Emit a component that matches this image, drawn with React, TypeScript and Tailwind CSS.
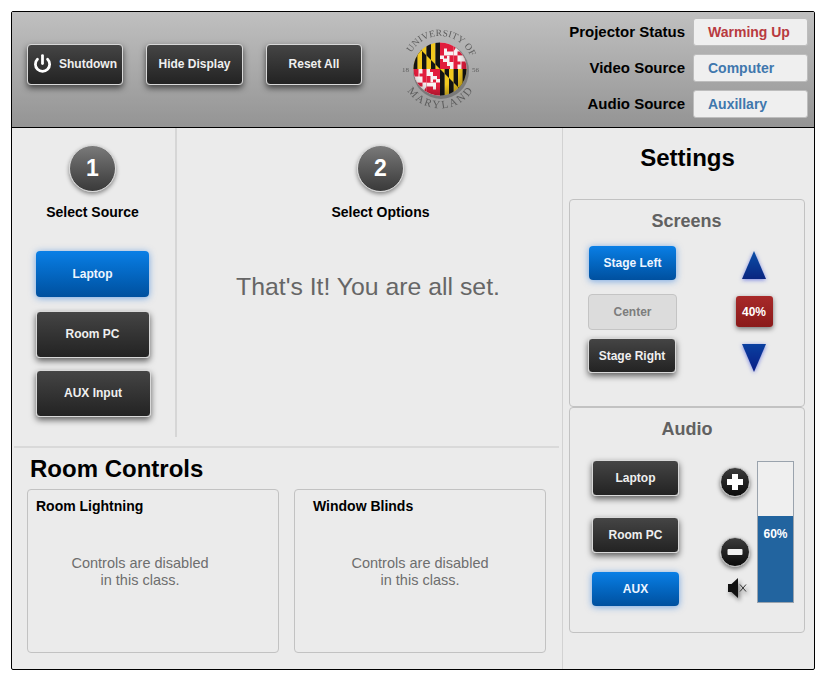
import React from 'react';
import { Power } from 'lucide-react';

const darkBtn =
  'flex items-center justify-center rounded-[4px] border border-[#d8d8d8] bg-gradient-to-b from-[#454545] to-[#232323] text-[12px] font-bold text-[#efefef] shadow-[0_3px_6px_rgba(0,0,0,0.6)]';
const blueBtn =
  'flex items-center justify-center rounded-[4px] bg-gradient-to-b from-[#0a7fe6] to-[#00509f] text-[12px] font-bold text-[#eef5ff] shadow-[0_1px_7px_rgba(20,110,220,0.55)]';
const panel = 'rounded-[4px] border border-[#c2c2c2]';

const Seal: React.FC = () => {
  const stripes = [0, 1, 2, 3, 4, 5];
  return (
    <svg width="84" height="84" viewBox="0 0 84 84" className="shrink-0 blur-[0.4px]">
      <defs>
        <clipPath id="globe">
          <circle cx="42" cy="42" r="26.5" />
        </clipPath>
        <clipPath id="bend">
          <polygon points="-27,-27 0,0 -27,0" />
        </clipPath>
        <g id="calvert">
          {stripes.map((i) => (
            <rect key={i} x={-27 + i * 4.5} y="-27" width="4.5" height="27" fill={i % 2 ? '#141414' : '#f2c81e'} />
          ))}
          <g clipPath="url(#bend)">
            {stripes.map((i) => (
              <rect key={i} x={-27 + i * 4.5} y="-27" width="4.5" height="27" fill={i % 2 ? '#f2c81e' : '#141414'} />
            ))}
          </g>
        </g>
        <g id="crossland">
          <rect x="-27" y="-27" width="27" height="27" fill="#f7f3f3" />
          <rect x="-13.5" y="-27" width="13.5" height="13.5" fill="#e11d3c" />
          <rect x="-27" y="-13.5" width="13.5" height="13.5" fill="#e11d3c" />
          {/* cross arms, colours swapped per quarter */}
          <path d="M-17.5 -24h-3v-3h10v3h-3v6.5h6.5v-3h3v10h-3v-3h-6.5v-4z" fill="#e11d3c" />
          <path d="M-13.5 -24h3v-3h-3zM-13.5 -17.5h6.5v-3h3v7h-9.5z" fill="#f7f3f3" />
          <path d="M-27 -18.5h3v1h6.5v4h-9.5z" fill="#e11d3c" />
          <path d="M-27 -13.5h9.5v6h-3v3h3v4.5h-4v-7.5h-5.5z" fill="#f7f3f3" />
          <path d="M-13.5 -13.5h4v6.5h6.5v-3h3v10h-10v-3h3v-4h-6.5z" fill="#e11d3c" />
        </g>
        <path id="arcTop" d="M12.3 27.6 A33 33 0 0 1 71.7 27.6" fill="none" />
        <path id="arcBottom" d="M8.3 62 A39 39 0 0 0 75.7 62" fill="none" />
        <radialGradient id="shade" cx="0.45" cy="0.4" r="0.65">
          <stop offset="0.65" stopColor="#000" stopOpacity="0" />
          <stop offset="1" stopColor="#000" stopOpacity="0.3" />
        </radialGradient>
      </defs>
      <circle cx="43" cy="44" r="28" fill="#4a4a4a" opacity="0.45" />
      <g clipPath="url(#globe)">
        <g transform="translate(42 42)">
          <use href="#calvert" />
          <use href="#crossland" transform="scale(-1 1)" />
          <use href="#crossland" transform="scale(1 -1)" />
          <use href="#calvert" transform="scale(-1 -1)" />
        </g>
        <circle cx="42" cy="42" r="26.5" fill="url(#shade)" />
      </g>
      <text fontFamily="'Liberation Serif', serif" fontSize="9.5" fill="#5c5c5c" letterSpacing="0.2">
        <textPath href="#arcTop" startOffset="2">UNIVERSITY OF</textPath>
      </text>
      <text fontFamily="'Liberation Serif', serif" fontSize="11" fill="#5c5c5c" letterSpacing="2">
        <textPath href="#arcBottom" startOffset="2">MARYLAND</textPath>
      </text>
      <text x="4" y="45" fontFamily="'Liberation Serif', serif" fontSize="7" fill="#5c5c5c">18</text>
      <text x="74" y="45" fontFamily="'Liberation Serif', serif" fontSize="7" fill="#5c5c5c">56</text>
    </svg>
  );
};

const Step: React.FC<{ n: string; label: string }> = ({ n, label }) => (
  <div className="flex flex-col items-center">
    <div className="flex h-[47px] w-[47px] items-center justify-center rounded-full border border-[#d5d5d5] bg-gradient-to-b from-[#7a7a7a] to-[#3a3a3a] text-[23px] font-bold text-white shadow-[0_2px_4px_rgba(0,0,0,0.45)]">
      {n}
    </div>
    <div className="mt-[11px] text-[14px] font-bold leading-[18px] text-black">{label}</div>
  </div>
);

const StatusRow: React.FC<{ label: string; value: string; color: string }> = ({ label, value, color }) => (
  <div className="flex items-center justify-end">
    <span className="mr-[8px] text-[15px] font-bold text-black">{label}</span>
    <span className={`flex h-[28px] w-[115px] items-center rounded-[3px] border border-[#bdbdbd] bg-[#efefef] pl-[14px] text-[14px] font-bold ${color}`}>
      {value}
    </span>
  </div>
);

const RoundBtn: React.FC<{ plus?: boolean }> = ({ plus }) => (
  <div className="flex h-[30px] w-[30px] items-center justify-center rounded-full border border-[#bbbbbb] bg-gradient-to-b from-[#3c3c3c] to-[#0c0c0c] shadow-[0_2px_4px_rgba(0,0,0,0.5)]">
    <svg width="22" height="22" viewBox="0 0 22 22">
      {plus ? (
        <path d="M8 3h6v5h5v6h-5v5H8v-5H3V8h5z" fill="#fff" />
      ) : (
        <rect x="3.5" y="8" width="15" height="6" rx="1" fill="#f2f2f2" />
      )}
    </svg>
  </div>
);

const DisabledCard: React.FC<{ title: string; titleClass: string; bodyClass: string }> = ({ title, titleClass, bodyClass }) => (
  <div className={`${panel} h-[164px] w-[252px]`}>
    <div className={`mt-[7px] text-[14px] font-bold leading-[18px] text-black ${titleClass}`}>{title}</div>
    <div className={`mt-[40px] text-center text-[14.5px] leading-[17px] text-[#6e6e6e] ${bodyClass}`}>
      Controls are disabled
      <br />
      in this class.
    </div>
  </div>
);

export default function App() {
  return (
    <div className="min-h-[687px] bg-white pl-[11px] pt-[11px] font-['Liberation_Sans',Arial,sans-serif]">
      <div className="h-[659px] w-[804px] overflow-hidden rounded-[2px] border border-black bg-[#ebebeb]">
        {/* top bar */}
        <div className="flex h-[116px] items-start border-b border-black bg-gradient-to-b from-[#c0c0c0] to-[#949494]">
          <button className={`${darkBtn} ml-[15px] mt-[32px] h-[41px] w-[96px] gap-[7px] pb-[2px]`}>
            <Power size={19} strokeWidth={3.5} color="#ffffff" />
            Shutdown
          </button>
          <button className={`${darkBtn} ml-[23px] mt-[32px] h-[41px] w-[97px] pb-[2px]`}>Hide Display</button>
          <button className={`${darkBtn} ml-[23px] mt-[32px] h-[41px] w-[96px] pb-[2px]`}>Reset All</button>
          <div className="ml-[36px] mt-[15px]">
            <Seal />
          </div>
          <div className="ml-auto mr-[6px] mt-[6px] flex flex-col gap-[8px]">
            <StatusRow label="Projector Status" value="Warming Up" color="text-[#b83a3f]" />
            <StatusRow label="Video Source" value="Computer" color="text-[#3f77ad]" />
            <StatusRow label="Audio Source" value="Auxillary" color="text-[#3f77ad]" />
          </div>
        </div>

        <div className="flex h-[542px]">
          <div className="w-[550px] shrink-0">
            {/* steps */}
            <div className="flex h-[309px]">
              <div className="flex w-[165px] shrink-0 flex-col items-center border-r-2 border-[#d6d6d6] pr-[2px] pt-[17px]">
                <Step n="1" label="Select Source" />
                <button className={`${blueBtn} mt-[30px] h-[46px] w-[113px] pb-[1px]`}>Laptop</button>
                <button className={`${darkBtn} mt-[14px] h-[47px] w-[114px] pb-[1px]`}>Room PC</button>
                <button className={`${darkBtn} ml-[1px] mt-[12px] h-[47px] w-[115px] pb-[1px]`}>AUX Input</button>
              </div>
              <div className="flex flex-1 flex-col items-center pt-[17px]">
                <div className="ml-[22px] flex flex-col items-center">
                  <Step n="2" label="Select Options" />
                </div>
                <div className="ml-[-3px] mt-[52px] text-[24.8px] leading-[28px] text-[#666666]">That's It! You are all set.</div>
              </div>
            </div>

            {/* room controls */}
            <div className="ml-[2px] mr-[3px] mt-[9px] border-t-2 border-[#d9d9d9]">
              <div className="ml-[16px] mt-[7px] text-[24px] font-bold leading-[28px] text-black">Room Controls</div>
              <div className="ml-[13px] mt-[6px] flex gap-[15px]">
                <DisabledCard title="Room Lightning" titleClass="ml-[8px]" bodyClass="pr-[26px]" />
                <DisabledCard title="Window Blinds" titleClass="ml-[18px]" bodyClass="" />
              </div>
            </div>
          </div>

          {/* settings */}
          <div className="w-[252px] border-l border-[#d2d2d2] pl-[6px]">
            <div className="mr-[8px] mt-[16px] text-center text-[24px] font-bold leading-[28px] text-black">Settings</div>
            <div className={`${panel} mt-[27px] h-[208px] w-[236px]`}>
              <div className="mt-[11px] pr-[1px] text-center text-[18px] font-bold leading-[20px] text-[#616161]">Screens</div>
              <div className="flex">
                <div className="ml-[18px] mt-[15px] flex w-[89px] flex-col items-start">
                  <button className={`${blueBtn} ml-[1px] h-[34px] w-[87px]`}>Stage Left</button>
                  <button className="mt-[14px] flex h-[36px] w-[89px] items-center justify-center rounded-[4px] border border-[#c4c4c4] bg-[#dcdcdc] text-[12px] font-bold text-[#7d7d7d]">
                    Center
                  </button>
                  <button className={`${darkBtn} mt-[8px] h-[35px] w-[88px]`}>Stage Right</button>
                </div>
                <div className="ml-[59px] mt-[18px] flex w-[36px] flex-col items-center">
                  <svg width="28" height="32" viewBox="0 0 28 32" className="drop-shadow-[0_1px_2px_rgba(40,60,220,0.6)]">
                    <defs>
                      <linearGradient id="up" x1="0" y1="0" x2="0" y2="1">
                        <stop offset="0" stopColor="#0a4fa8" />
                        <stop offset="1" stopColor="#0a2580" />
                      </linearGradient>
                    </defs>
                    <path d="M14 2 L26 30 H2 Z" fill="url(#up)" />
                  </svg>
                  <div className="mt-[15px] flex h-[31px] w-[37px] items-center justify-center rounded-[3px] bg-gradient-to-b from-[#a82a2a] to-[#8a1a1a] text-[12px] font-bold text-white shadow-[0_2px_5px_rgba(0,0,0,0.5)]">
                    40%
                  </div>
                  <svg width="28" height="32" viewBox="0 0 28 32" className="mt-[15px] drop-shadow-[0_1px_2px_rgba(40,60,220,0.6)]">
                    <defs>
                      <linearGradient id="down" x1="0" y1="0" x2="0" y2="1">
                        <stop offset="0" stopColor="#0a40a0" />
                        <stop offset="1" stopColor="#0a1c85" />
                      </linearGradient>
                    </defs>
                    <path d="M2 2 H26 L14 30 Z" fill="url(#down)" />
                  </svg>
                </div>
              </div>
            </div>

            <div className={`${panel} h-[226px] w-[236px]`}>
              <div className="mt-[11px] text-center text-[18px] font-bold leading-[20px] text-[#616161]">Audio</div>
              <div className="flex">
                <div className="ml-[22px] mt-[21px] flex w-[87px] flex-col">
                  <button className={`${darkBtn} h-[36px] w-[87px]`}>Laptop</button>
                  <button className={`${darkBtn} mt-[21px] h-[36px] w-[87px]`}>Room PC</button>
                  <button className={`${blueBtn} mt-[19px] h-[34px] w-[87px]`}>AUX</button>
                </div>
                <div className="ml-[41px] flex w-[30px] flex-col items-center">
                  <div className="mt-[28px]">
                    <RoundBtn plus />
                  </div>
                  <div className="mt-[40px]">
                    <RoundBtn />
                  </div>
                  <svg width="22" height="24" viewBox="0 0 22 24" className="ml-[6px] mt-[9px] drop-shadow-[2px_3px_2px_rgba(0,0,0,0.45)]">
                    <path d="M1 8h3.5L11 2v20l-6.5-6H1z" fill="#111" />
                    <path d="M13 8.5l6 7M19 8.5l-6 7" stroke="#333" strokeWidth="1" fill="none" />
                  </svg>
                </div>
                <div className="ml-[7px] mt-[22px] flex h-[142px] w-[37px] flex-col border border-[#9aa3ad] bg-[#efefef]">
                  <div className="h-[54px]" />
                  <div className="flex-1 bg-[#22649f] pt-[11px] text-center text-[12px] font-bold leading-[14px] text-white">60%</div>
                </div>
              </div>
            </div>
          </div>
        </div>
      </div>
    </div>
  );
}
